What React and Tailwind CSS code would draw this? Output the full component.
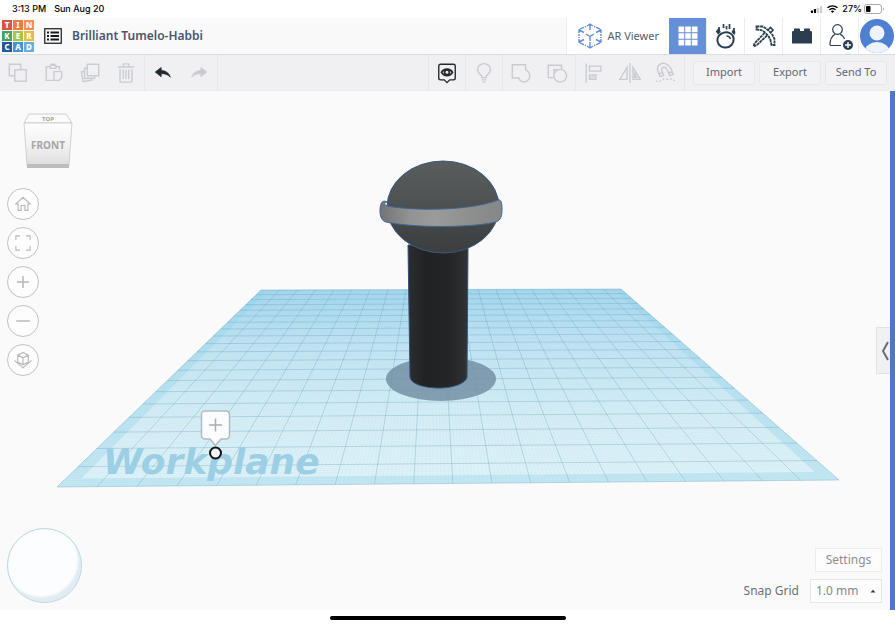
import React from "react";

const SANS = "font-['Noto_Sans',sans-serif]";

/* ---------- workplane geometry ---------- */
// u runs left to right, v runs front to back, both 0..1
const NEAR_LEFT = [57, 487];
const NEAR_RIGHT = [839, 480];
const FAR_RIGHT = [621, 289];
const FAR_LEFT = [261, 290];

function makeProjection(p0, p1, p2, p3) {
  const [x0, y0] = p0;
  const [x1, y1] = p1;
  const [x2, y2] = p2;
  const [x3, y3] = p3;
  const dx1 = x1 - x2;
  const dx2 = x3 - x2;
  const sx = x0 - x1 + x2 - x3;
  const dy1 = y1 - y2;
  const dy2 = y3 - y2;
  const sy = y0 - y1 + y2 - y3;
  const det = dx1 * dy2 - dx2 * dy1;
  const g = (sx * dy2 - dx2 * sy) / det;
  const h = (dx1 * sy - sx * dy1) / det;
  return (u, v) => {
    const w = g * u + h * v + 1;
    const x = ((x1 - x0 + g * x1) * u + (x3 - x0 + h * x3) * v + x0) / w;
    const y = ((y1 - y0 + g * y1) * u + (y3 - y0 + h * y3) * v + y0) / w;
    return `${x.toFixed(2)} ${y.toFixed(2)}`;
  };
}

const project = makeProjection(NEAR_LEFT, NEAR_RIGHT, FAR_RIGHT, FAR_LEFT);

function gridLines(count) {
  let columns = "";
  let rows = "";
  for (let i = 0; i <= count; i++) {
    const t = i / count;
    columns += `M${project(t, 0)}L${project(t, 1)}`;
    rows += `M${project(0, t)}L${project(1, t)}`;
  }
  return columns + rows;
}

function quad(a, b) {
  return `M${project(a, a)}L${project(b, a)}L${project(b, b)}L${project(a, b)}Z`;
}

function Scene() {
  return (
    <svg viewBox="0 91 890 519" className="absolute inset-0 h-full w-full" role="img" aria-label="3D design">
      <defs>
        <linearGradient id="plane" x1="0" y1="0" x2="0" y2="1">
          <stop offset="0" stopColor="#b0def4" />
          <stop offset="0.3" stopColor="#cae9f6" />
          <stop offset="0.65" stopColor="#daf0f7" />
          <stop offset="1" stopColor="#e1f4f9" />
        </linearGradient>
        <linearGradient id="ball" x1="0" y1="0" x2="0" y2="1">
          <stop offset="0" stopColor="#5a5d5d" />
          <stop offset="0.45" stopColor="#4f5252" />
          <stop offset="0.75" stopColor="#424545" />
          <stop offset="1" stopColor="#3c3e3f" />
        </linearGradient>
        <linearGradient id="ring" x1="0" y1="0" x2="1" y2="0">
          <stop offset="0" stopColor="#727475" />
          <stop offset="0.25" stopColor="#929393" />
          <stop offset="0.45" stopColor="#9b9b9b" />
          <stop offset="0.75" stopColor="#8d8e8e" />
          <stop offset="1" stopColor="#858788" />
        </linearGradient>
        <linearGradient id="handle" x1="0" y1="0" x2="1" y2="0">
          <stop offset="0" stopColor="#2b2d2e" />
          <stop offset="0.3" stopColor="#212223" />
          <stop offset="0.7" stopColor="#242526" />
          <stop offset="1" stopColor="#303234" />
        </linearGradient>
      </defs>

      <path d={quad(0, 1)} fill="url(#plane)" />
      <path d={gridLines(200)} stroke="#7dbcd6" strokeOpacity="0.16" strokeWidth="0.5" fill="none" />
      <path d={quad(0, 1) + quad(0.02, 0.98)} fill="#8fd2e8" fillOpacity="0.35" fillRule="evenodd" />
      <path d={gridLines(20)} stroke="#5a94ac" strokeOpacity="0.4" strokeWidth="0.7" fill="none" />

      <text x="103" y="474" className="fill-[#9dcfe4] font-['DejaVu_Sans',sans-serif] text-[36px] font-bold italic">
        Workplane
      </text>

      <ellipse cx="441" cy="379" rx="55" ry="22" fill="#7491a4" fillOpacity="0.85" />
      <path
        d="M408 245L410 377C411 384 424 388 439 388C454 388 466 383 467 377L468 245Z"
        fill="url(#handle)"
        stroke="#33507c"
        strokeWidth="1"
      />
      <ellipse cx="443" cy="207" rx="56" ry="46" fill="url(#ball)" stroke="#3b5a80" strokeWidth="1" />
      <path
        d="M387 202C382 199 380 204 380 211C380 217 382 221 386 222C414 228 470 228 496 222C501 220 502 216 502 209C502 203 501 199 498 200C470 211 414 211 387 206C384 205 384 202 387 202Z"
        fill="url(#ring)"
        stroke="#3f6594"
        strokeWidth="1"
      />

      <path
        d="M205 411H226A3.500 3.500 0 0 1 229.500 414.500V435.500A3.500 3.500 0 0 1 226 439H221L215.500 445.500L210 439H205A3.500 3.500 0 0 1 201.500 435.500V414.500A3.500 3.500 0 0 1 205 411Z"
        fill="#fbfcfd"
        stroke="#b4bbc0"
        strokeWidth="1.500"
      />
      <path d="M209 425H222M215.500 418.500V431.500" stroke="#a9adb0" strokeWidth="1.500" />
      <circle cx="215.500" cy="453" r="5.500" fill="#eef3f6" stroke="#111" strokeWidth="2" />
    </svg>
  );
}

/* ---------- small building blocks ---------- */
function Icon({ size = 24, className = "", children }) {
  return (
    <svg
      width={size}
      height={size}
      viewBox="0 0 24 24"
      fill="none"
      stroke="currentColor"
      strokeWidth="1.5"
      className={`shrink-0 ${className}`}
      aria-hidden="true"
    >
      {children}
    </svg>
  );
}

function Tool({ label, active, children }) {
  return (
    <button
      type="button"
      aria-label={label}
      className={`flex h-9 w-9 items-center justify-center ${active ? "text-[#24292d]" : "text-[#c9cbd1]"}`}
    >
      <Icon size={22}>{children}</Icon>
    </button>
  );
}

function ToolGroup({ children, className = "" }) {
  return <div className={`flex border-[#e6e7ea] ${className}`}>{children}</div>;
}

function HeaderTab({ label, selected, children }) {
  return (
    <button
      type="button"
      aria-label={label}
      className={`flex w-[38px] items-center justify-center border-r border-[#ececef] ${
        selected ? "bg-[#658fd6] text-white" : "text-[#2b3e50]"
      }`}
    >
      {children}
    </button>
  );
}

function ViewButton({ label, children }) {
  return (
    <button
      type="button"
      aria-label={label}
      className="flex h-8 w-8 items-center justify-center rounded-full border border-[#c2c2c2] bg-[#fdfdfd] text-[#b8b8b8]"
    >
      <Icon size={18}>{children}</Icon>
    </button>
  );
}

/* ---------- sections ---------- */
function StatusBar() {
  return (
    <div className="flex h-[18px] items-center justify-between bg-white pr-2.5 pl-3 font-['Inter',sans-serif] text-[9px] font-medium text-black">
      <div className="flex gap-2">
        <span>3:13 PM</span>
        <span>Sun Aug 20</span>
      </div>
      <div className="flex items-center gap-1">
        <svg width="13" height="7" viewBox="0 0 13 8" aria-hidden="true">
          <rect x="0" y="5" width="2.500" height="3" rx="0.500" />
          <rect x="3.500" y="3.500" width="2.500" height="4.500" rx="0.500" />
          <rect x="7" y="2" width="2.500" height="6" rx="0.500" fill="#ccc" />
          <rect x="10.500" y="0" width="2.500" height="8" rx="0.500" fill="#ccc" />
        </svg>
        <svg width="11" height="8" viewBox="0 0 11 8" fill="none" stroke="#000" strokeWidth="1.400" aria-hidden="true">
          <path d="M0.500 2.800C3.300 0.200 7.700 0.200 10.500 2.800M2.400 4.800C4.200 3.200 6.800 3.200 8.600 4.800" />
          <path d="M3.900 6.200C4.900 5.400 6.100 5.400 7.100 6.200L5.500 8Z" fill="#000" stroke="none" />
        </svg>
        <div className="flex items-center gap-0.5">
          <span>27%</span>
          <svg width="21" height="10" viewBox="0 0 21 10" aria-hidden="true">
            <rect x="0.500" y="0.500" width="17" height="9" rx="2.500" fill="none" stroke="#a8a8a8" />
            <rect x="2" y="2" width="4.500" height="6" rx="1" />
            <path d="M19 3.500C20.300 4 20.300 6 19 6.500Z" fill="#a8a8a8" />
          </svg>
        </div>
      </div>
    </div>
  );
}

const LOGO = [
  ["T", "bg-[#dc5440]"],
  ["I", "bg-[#ec7a45]"],
  ["N", "bg-[#f0924b]"],
  ["K", "bg-[#42a55c]"],
  ["E", "bg-[#a3c644]"],
  ["R", "bg-[#e9bd45]"],
  ["C", "bg-[#21589f]"],
  ["A", "bg-[#4a90d0]"],
  ["D", "bg-[#6cabdd]"],
];

function Logo() {
  return (
    <a href="#home" aria-label="Tinkercad" className="ml-0.5 grid grid-cols-3 gap-px">
      {LOGO.map(([letter, color]) => (
        <span
          key={letter}
          className={`flex h-2.5 w-2.5 items-center justify-center text-[8px] leading-none font-extrabold text-white ${color}`}
        >
          {letter}
        </span>
      ))}
    </a>
  );
}

function Header() {
  return (
    <header className="flex h-[37px] justify-between border-b border-[#dcdde1] bg-[#f9f9fa]">
      <div className="flex items-center">
        <Logo />
        <button type="button" aria-label="Designs" className="ml-2.5">
          <svg width="18" height="16" viewBox="0 0 18 16" fill="none" stroke="#15181b" aria-hidden="true">
            <rect x="0.750" y="0.750" width="16.500" height="14.500" strokeWidth="1.200" />
            <path d="M3 4.500H5M3 8H5M3 11.500H5M6.500 4.500H15M6.500 8H15M6.500 11.500H15" strokeWidth="1.900" />
          </svg>
        </button>
        <h1 className="ml-2.5 text-[12px] font-semibold text-[#4a566d]">Brilliant Tumelo-Habbi</h1>
      </div>

      <nav className="flex border-l border-[#ececef] bg-white">
        <button type="button" className="flex items-center gap-1 px-2.5 text-[11px] text-[#545e69]">
          <svg width="26" height="26" viewBox="0 0 26 26" fill="none" stroke="#5f8ed8" strokeWidth="1.400" aria-hidden="true">
            <path d="M10 3L13 1L16 3M10 23L13 25L16 23M2 10V7L5 5M21 5L24 7V10M2 16V19L5 21M21 21L24 19V16M13 1V7M13 19V25M2 7L7 9.500M24 7L19 9.500M2 19L7 16.500M24 19L19 16.500" />
            <path d="M9 11L13 13.500L17 11M13 13.500V18" />
            <path d="M5 5L9 3.500M21 5L17 3.500M5 21L9 22.500M21 21L17 22.500M2 11V15M24 11V15" strokeDasharray="2 1" />
          </svg>
          AR Viewer
        </button>
        <HeaderTab label="3D design" selected>
          <svg width="20" height="20" viewBox="0 0 20 20" fill="currentColor" aria-hidden="true">
            <path d="M0.500 0.500H6.200V6.200H0.500ZM7.200 0.500H12.800V6.200H7.200ZM13.800 0.500H19.500V6.200H13.800ZM0.500 7.200H6.200V12.800H0.500ZM7.200 7.200H12.800V12.800H7.200ZM13.800 7.200H19.500V12.800H13.800ZM0.500 13.800H6.200V19.500H0.500ZM7.200 13.800H12.800V19.500H7.200ZM13.800 13.800H19.500V19.500H13.800Z" />
          </svg>
        </HeaderTab>
        <HeaderTab label="Sim lab">
          <svg width="22" height="26" viewBox="0 0 22 26" fill="none" stroke="currentColor" strokeWidth="2" aria-hidden="true">
            <path d="M6.500 10.500C3 12 1 17 3.500 21C6 25 13 26 16.500 22C20 18 19 12.500 15.500 10.500C13 9 9 9 6.500 10.500Z" />
            <path d="M11.500 13C13.500 13 15 14 15.500 16" strokeWidth="1.500" />
            <path d="M8.500 1V5M11.500 3V6.500M14.500 1V6M4 4V8M19 5V10" strokeWidth="1.700" />
            <path d="M3.500 5L5.800 9L3 11.500L0.800 8.500ZM18.500 6L20.500 9L19.500 12L16.500 9Z" fill="currentColor" stroke="none" />
          </svg>
        </HeaderTab>
        <HeaderTab label="Blocks">
          <svg width="24" height="24" viewBox="0 0 24 24" fill="none" stroke="currentColor" aria-hidden="true">
            <path d="M4.500 2.500H11L14 4.500L17.500 7.500L20.500 11L22.500 15V21H19.500L18.500 16L16.500 12L12.500 8L9 6L4.500 5.500Z" strokeWidth="1.800" strokeDasharray="3 0.600" />
            <path d="M15 11.500L5 21L1.500 22.500L2.500 19.500L12.500 9" strokeWidth="1.800" strokeDasharray="3 0.600" />
            <path d="M16 6L18.500 3.500L21 6L19 8.500" strokeWidth="1.600" />
          </svg>
        </HeaderTab>
        <HeaderTab label="Bricks">
          <svg width="20" height="16" viewBox="0 0 20 16" fill="currentColor" aria-hidden="true">
            <path d="M0 4Q0 3 1 3H2V1.200Q2 0.500 2.700 0.500H7.300Q8 0.500 8 1.200V3H12V1.200Q12 0.500 12.700 0.500H17.300Q18 0.500 18 1.200V3H19Q20 3 20 4V15.500H0Z" />
          </svg>
        </HeaderTab>
        <HeaderTab label="Invite people">
          <svg width="28" height="30" viewBox="0 0 28 30" fill="none" stroke="currentColor" strokeWidth="1.200" aria-hidden="true">
            <circle cx="11.500" cy="8.500" r="4.800" />
            <path d="M15 24.500H5Q4 24.500 4 23.500C4 18 6 15 9 13.200M14 13.200C16.500 14.500 18 16 18.500 18" />
            <circle cx="22" cy="24" r="5" fill="currentColor" stroke="none" />
            <path d="M19 24H25M22 21V27" stroke="#fff" strokeWidth="1.400" />
          </svg>
        </HeaderTab>
        <button type="button" aria-label="Account" className="flex w-9 items-center justify-center">
          <svg width="34" height="34" viewBox="0 0 34 34" aria-hidden="true">
            <clipPath id="avatar">
              <circle cx="17" cy="17" r="17" />
            </clipPath>
            <g clipPath="url(#avatar)">
              <rect width="34" height="34" fill="#4f7fd2" />
              <circle cx="17" cy="14" r="7.500" fill="#edf2fb" />
              <ellipse cx="17" cy="33" rx="12.500" ry="10" fill="#edf2fb" />
            </g>
          </svg>
        </button>
      </nav>
    </header>
  );
}

function Toolbar() {
  const action =
    "h-6 w-[62px] rounded-[3px] border border-[#e6e7ea] bg-[#f3f3f5] text-[11px] text-[#5f6772]";
  return (
    <div role="toolbar" className="flex h-9 items-center justify-between border-b border-[#ebebee] bg-[#f0f0f3]">
      <div className="flex">
        <ToolGroup className="border-r">
          <Tool label="Copy">
            <path d="M8 15H2.500V2.500H15V8" />
            <rect x="8.500" y="8.500" width="12.500" height="12.500" />
          </Tool>
          <Tool label="Paste">
            <path d="M11 20H3.500V5H8M14 5H18V9" />
            <path d="M8 3.500H14V7H8ZM9.500 3.500V2.500H12.500V3.500" />
            <path d="M12 10.500H20.500V17L17.500 20H12Z" />
          </Tool>
          <Tool label="Duplicate">
            <rect x="9" y="2.500" width="12.500" height="12.500" />
            <path d="M9 6.500L6 7V18L17 17.500V15M6 10L2.500 11L4.500 21.500L14 19.500V18" />
          </Tool>
          <Tool label="Delete">
            <path d="M3.500 6V5.500H20.500V6M9 5V2H15V5M5.500 7.500V21Q5.500 22 6.500 22H17.500Q18.500 22 18.500 21V7.500M9 8.500V18.500M12 8.500V18.500M15 8.500V18.500" />
          </Tool>
        </ToolGroup>
        <ToolGroup className="border-r">
          <Tool label="Undo" active>
            <path d="M10 6L3.500 11L10 16V12.800C14 12.500 17 13.500 20 16.500C18.500 12 15.500 9.500 10 9.200Z" fill="currentColor" strokeWidth="0.800" />
          </Tool>
          <Tool label="Redo">
            <path d="M14 6L20.500 11L14 16V12.800C10 12.500 7 13.500 4 16.500C5.500 12 8.500 9.500 14 9.200Z" fill="currentColor" strokeWidth="0.800" />
          </Tool>
        </ToolGroup>
      </div>

      <div className="flex items-center">
        <ToolGroup className="border-x">
          <Tool label="Show all" active>
            <path d="M5 2.500H19Q21 2.500 21 4.500V17.500Q21 19.500 19 19.500H15L12 22.500L9 19.500H5Q3 19.500 3 17.500V4.500Q3 2.500 5 2.500Z" strokeWidth="1.500" />
            <path d="M6 11.300C8.500 6.500 15.500 6.500 18 11.300C15.500 16 8.500 16 6 11.300Z" strokeWidth="1.900" />
            <circle cx="12" cy="11.300" r="2.600" strokeWidth="1.900" />
          </Tool>
        </ToolGroup>
        <ToolGroup className="border-r">
          <Tool label="Light">
            <path d="M9.500 17V15C8 13.500 5 11.500 5 8.500C5 4.500 8.300 1.800 12 1.800S19 4.500 19 8.500C19 11.500 16 13.500 14.500 15V17ZM9.500 19.500H14.500M10.500 22H13.500" />
          </Tool>
        </ToolGroup>
        <ToolGroup className="border-r">
          <Tool label="Group">
            <path d="M2.500 3H17V8.500C22 10.500 23 16.500 19.500 20C16.500 23 11.500 22.500 9.500 17.500H2.500Z" />
          </Tool>
          <Tool label="Ungroup">
            <path d="M8 17H2.500V3.500H17V8" />
            <circle cx="15.500" cy="15" r="7" />
            <path d="M8.500 12V8.500H12" />
          </Tool>
        </ToolGroup>
        <ToolGroup className="border-r">
          <Tool label="Align">
            <path d="M3.500 1.500V22.500M7 4.500H19.500V10H7Z" />
            <path d="M7 14H14V19H7Z" fill="currentColor" fillOpacity="0.5" />
          </Tool>
          <Tool label="Mirror">
            <path d="M12 1V23M8.800 6V19H0.800ZM15.200 6V19H23.200Z" />
            <path d="M17 12.500V17H19.500Z" fill="currentColor" />
          </Tool>
          <Tool label="Cruise">
            <path d="M5.500 16L3 9.500C1.500 4 6 0.800 10.500 1.500C16 2.500 18 8 20 13.500L16 15L13 8C12 6 10.500 5.500 9 6C7 6.500 6.800 8 7.500 10L9.500 14.500ZM4.500 13L8.500 11.500M15 12L18.800 10.500" />
            <path d="M1 20.500C5 23.500 8 17.500 12 18.500S18 17 23 21.500" strokeDasharray="2 2" />
          </Tool>
        </ToolGroup>
        <div className="flex gap-1 px-2">
          <button type="button" className={action}>Import</button>
          <button type="button" className={action}>Export</button>
          <button type="button" className={action}>Send To</button>
        </div>
      </div>
    </div>
  );
}

function ViewCube() {
  return (
    <button type="button" aria-label="View cube" className="ml-4">
      <svg width="50" height="56" viewBox="0 0 50 56" aria-hidden="true">
        <defs>
          <linearGradient id="cube" x1="0" y1="0" x2="0" y2="1">
            <stop offset="0" stopColor="#fdfdfd" />
            <stop offset="0.5" stopColor="#f3f3f3" />
            <stop offset="1" stopColor="#dedede" />
          </linearGradient>
        </defs>
        <path d="M1 10L6 1H43L49 10Z" fill="#fbfbfb" stroke="#c4c4c4" strokeWidth="0.800" />
        <path d="M1 10H49L46 52H4Z" fill="url(#cube)" stroke="#c8c8c8" strokeWidth="0.800" />
        <path d="M4 51H46V55H4Z" fill="#bcbcbc" />
        <text x="25" y="8" textAnchor="middle" className="fill-[#a0a0a0] text-[6px] font-bold">TOP</text>
        <text x="25" y="36" textAnchor="middle" className="fill-[#a6a6a6] text-[10px] font-bold">FRONT</text>
      </svg>
    </button>
  );
}

function Viewport() {
  return (
    <main className="relative flex flex-1 justify-between border-r-[5px] border-[#4c78cc] bg-[#fafafb]">
      <Scene />
      <div className="relative flex flex-col justify-between pt-[22px] pb-[7px] pl-[7px]">
        <div className="flex flex-col items-start gap-[19px]">
          <ViewCube />
          <div className="flex flex-col gap-[7px]">
            <ViewButton label="Home view">
              <path d="M5.500 20.500V12H2.500L12 3L21.500 12H18.500V20.500H14.500V14H9.500V20.500Z" />
            </ViewButton>
            <ViewButton label="Fit view">
              <path d="M2.500 8V2.500H8M16 2.500H21.500V8M21.500 16V21.500H16M8 21.500H2.500V16" />
            </ViewButton>
            <ViewButton label="Zoom in">
              <path d="M4 12H20M12 4V20" strokeWidth="2" />
            </ViewButton>
            <ViewButton label="Zoom out">
              <path d="M3 12H21" strokeWidth="2" />
            </ViewButton>
            <ViewButton label="Orthographic view">
              <path d="M12 2L19 5.500V15L12 18.500L5 15V5.500ZM5 5.500L12 9L19 5.500M12 9V18.500M0.500 12.500L12 22.500L23.500 12.500" />
            </ViewButton>
          </div>
        </div>
        <button
          type="button"
          aria-label="Orbit"
          className="h-[75px] w-[75px] rounded-full border border-[#b5d7df] bg-[#fcfdfe] shadow-[inset_-3px_-5px_2px_#e3ebf2]"
        />
      </div>

      <div className="relative flex flex-col items-end justify-end pb-[7px]">
        <button
          type="button"
          aria-label="Show shapes panel"
          className="absolute top-[236px] right-0 flex h-[47px] w-3.5 items-center justify-end border border-r-0 border-[#e2e2e5] bg-[#f1f1f3]"
        >
          <svg width="9" height="20" viewBox="0 0 9 20" fill="none" stroke="#6c6c6c" strokeWidth="2" aria-hidden="true">
            <path d="M7 1L2 10L7 19" />
          </svg>
        </button>
        <div className="flex flex-col items-end gap-[7px] pr-2">
          <button type="button" className="h-6 w-[67px] border border-[#ececee] bg-[#fdfdfd] text-[12px] text-[#8b8e91]">
            Settings
          </button>
          <div className="flex items-center gap-[11px]">
            <label htmlFor="snap" className="text-[12px] text-[#6b7075]">
              Snap Grid
            </label>
            <div className="relative">
              <select
                id="snap"
                defaultValue="1.0"
                className="block h-6 w-[72px] appearance-none border border-[#e6e6e8] bg-[#fdfdfd] pl-[5px] text-[12px] text-[#85888b]"
              >
                <option value="1.0">1.0 mm</option>
              </select>
              <svg width="6" height="4" viewBox="0 0 6 4" className="pointer-events-none absolute top-2.5 right-1.5" aria-hidden="true">
                <path d="M0.500 3.500L3 0.800L5.500 3.500Z" fill="#3c3c3c" />
              </svg>
            </div>
          </div>
        </div>
      </div>
    </main>
  );
}

export default function App() {
  return (
    <div className={`flex min-h-screen flex-col bg-white ${SANS}`}>
      <StatusBar />
      <Header />
      <Toolbar />
      <Viewport />
      <footer className="flex h-[15px] items-center justify-center bg-white">
        <div className="h-1 w-[236px] rounded-full bg-black" />
      </footer>
    </div>
  );
}
